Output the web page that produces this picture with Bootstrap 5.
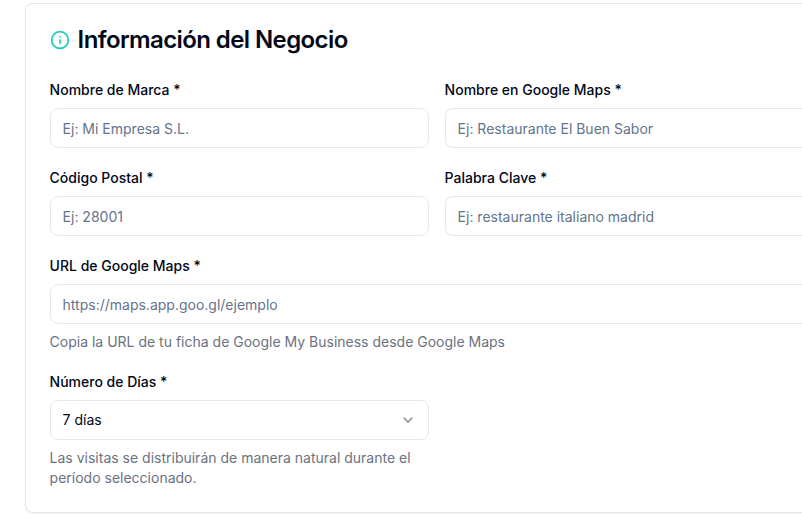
<!doctype html>
<html lang="es">
<head>
<meta charset="utf-8">
<title>Información del Negocio</title>
<link href="https://cdn.jsdelivr.net/npm/bootstrap@5.3.0/dist/css/bootstrap.min.css" rel="stylesheet">
<style>
html, body { height: 100%; overflow: hidden; background: #fff; }
body { font-family: Inter, "Liberation Sans", sans-serif; color: #020817; padding: 3px 0 0 24.6px; }
.biz-card { width: 824px; border: 1px solid #e2e8f0; border-radius: 8px; padding: 20px 24px 24px; box-shadow: 0 1px 2px rgba(0,0,0,.05); background: #fff; }
.biz-title { font-size: 24px; line-height: 32px; font-weight: 600; letter-spacing: -.6px; margin: 0 0 24px; color: #020817; }
.biz-icon { width: 20px; height: 20px; flex: none; color: #1ccdb6; }
.biz-form { display: grid; grid-template-columns: 379px 379px; column-gap: 16px; row-gap: 20px; }
.biz-full { grid-column: 1 / 3; }
.biz-label { display: block; font-size: 14px; line-height: 20px; font-weight: 500; margin-bottom: 8px; color: #020817; }
.biz-form .form-control, .biz-form .form-select { height: 40px; font-size: 14px; line-height: 20px; padding: 8px 12px; border: 1px solid #e2e8f0; border-radius: 8px; color: #020817; font-family: inherit; box-shadow: none; }
.biz-form .form-control::placeholder { color: #64748b; opacity: 1; }
.biz-form .form-select { background-position: right 12px center; background-size: 16px 16px; background-image: url("data:image/svg+xml,%3csvg xmlns='http://www.w3.org/2000/svg' viewBox='0 0 24 24' fill='none' stroke='%23808389' stroke-width='2' stroke-linecap='round' stroke-linejoin='round'%3e%3cpath d='m6 9 6 6 6-6'/%3e%3c/svg%3e"); }
.biz-help { font-size: 14px; line-height: 20px; color: #6b7280; margin: 8px 0 0; }
</style>
</head>
<body>
<div class="biz-card">
  <h2 class="biz-title d-flex align-items-center gap-2">
    <svg class="biz-icon" viewBox="0 0 24 24" fill="none" stroke="currentColor" stroke-width="2" stroke-linecap="round" stroke-linejoin="round" aria-hidden="true"><circle cx="12" cy="12" r="10"/><path d="M12 16v-4"/><path d="M12 8h.01"/></svg>
    <span>Información del Negocio</span>
  </h2>
  <form class="biz-form">
    <div>
      <label class="biz-label" for="a">Nombre de Marca *</label>
      <input id="a" class="form-control" type="text" placeholder="Ej: Mi Empresa S.L.">
    </div>
    <div>
      <label class="biz-label" for="b">Nombre en Google Maps *</label>
      <input id="b" class="form-control" type="text" placeholder="Ej: Restaurante El Buen Sabor">
    </div>
    <div>
      <label class="biz-label" for="c">Código Postal *</label>
      <input id="c" class="form-control" type="text" placeholder="Ej: 28001">
    </div>
    <div>
      <label class="biz-label" for="d">Palabra Clave *</label>
      <input id="d" class="form-control" type="text" placeholder="Ej: restaurante italiano madrid">
    </div>
    <div class="biz-full">
      <label class="biz-label" for="e">URL de Google Maps *</label>
      <input id="e" class="form-control" type="text" placeholder="https://maps.app.goo.gl/ejemplo">
      <p class="biz-help">Copia la URL de tu ficha de Google My Business desde Google Maps</p>
    </div>
    <div>
      <label class="biz-label" for="f">Número de Días *</label>
      <select id="f" class="form-select"><option>7 días</option><option>14 días</option><option>30 días</option></select>
      <p class="biz-help">Las visitas se distribuirán de manera natural durante el período seleccionado.</p>
    </div>
  </form>
</div>
<script src="https://cdn.jsdelivr.net/npm/bootstrap@5.3.0/dist/js/bootstrap.bundle.min.js"></script>
</body>
</html>
